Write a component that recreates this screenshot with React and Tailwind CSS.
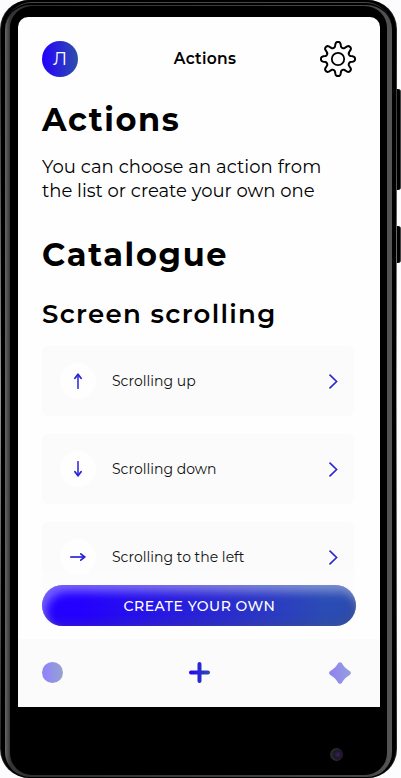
import React from "react";

const gearPath =
  Array.from({ length: 240 }, (_, i) => {
    const a = (i / 240) * Math.PI * 2;
    const r = 14.5 + (2.6 * Math.tanh(1.6 * Math.cos(8 * a) - 0.1)) / Math.tanh(1.6);
    return `${i ? "L" : "M"}${(18 + r * Math.cos(a)).toFixed(2)} ${(18 + r * Math.sin(a)).toFixed(2)}`;
  }).join("") + "Z";

function Gear() {
  return (
    <svg className="size-9" viewBox="0 0 36 36" fill="none" stroke="#000" strokeWidth="2" strokeLinejoin="round">
      <path d={gearPath} />
      <circle cx="18" cy="18" r="6.2" strokeWidth="1.8" />
    </svg>
  );
}

function Arrow({ turn }) {
  return (
    <svg className={`size-4 ${turn}`} viewBox="0 0 16 16" fill="none" stroke="#2b24d8" strokeWidth="1.8" strokeLinecap="round" strokeLinejoin="round">
      <path d="M8 15.2V1.4" strokeOpacity="0.85" />
      <path d="M4.9 5.2L8 1.4L11.1 5.2" />
    </svg>
  );
}

function Row({ label, turn }) {
  return (
    <li className="flex h-[70px] w-[312px] shrink-0 items-center rounded-[5px] bg-[#fbfbfb] pl-[18px] pr-4">
      <span className="flex size-9 items-center justify-center rounded-full bg-[#fefefe]">
        <Arrow turn={turn} />
      </span>
      <span className="ml-4 flex-1 whitespace-nowrap text-[14px] leading-5 text-[#111]">{label}</span>
      <svg className="h-4 w-[10px]" viewBox="0 0 10 16" fill="none" stroke="#2b24d8" strokeWidth="1.6">
        <path d="M1.5 1.7L8.6 8.5L1.5 15.3" />
      </svg>
    </li>
  );
}

export default function App() {
  return (
    <div className="relative h-[778px] w-[401px] overflow-hidden bg-[#fcfcff] font-['Montserrat','Inter',sans-serif] text-black">
      <div className="absolute left-[396px] top-[89px] h-[101px] w-[5px] rounded-r-[3px] border-r border-[#444] bg-black" />
      <div className="absolute left-[396px] top-[226px] h-[37px] w-[5px] rounded-r-[3px] border-r border-[#444] bg-black" />
      <div className="relative h-[778px] w-[397px] rounded-[29px] bg-gradient-to-b from-[#222] via-[#999] to-[#222] px-px">
        <div className="h-[778px] w-[395px] rounded-[29px] bg-black pl-[4px] pr-[4px] pt-[2px] pb-px">
          <div className="h-[775px] w-[387px] rounded-[27px] bg-[#484848] pt-px">
            <div className="h-[774px] rounded-[26px] bg-black pt-[2px]">
              <div className="h-[772px] rounded-[25px] bg-[linear-gradient(to_right,#666_0px,#353535_5px,#303030_30px,#484848_365px,#555_387px)] px-[5px] pb-[2px] pt-px">
                <div className="flex h-[769px] w-[377px] flex-col rounded-[22px] bg-black pl-2 pr-[7px] pt-[11px]">
                  <main className="relative flex h-[690px] w-[362px] flex-col overflow-hidden rounded-t-[10px] bg-[#fefefe]">
                    <header className="mt-6 grid h-9 grid-cols-[36px_1fr_36px] items-center px-6">
                      <span className="flex size-9 items-center justify-center rounded-full bg-[linear-gradient(to_right,#2400ff,#2d50a8)] text-[18px] leading-none text-white">Л</span>
                      <span className="ml-3 whitespace-nowrap text-center text-[15.5px] font-semibold leading-5 tracking-[0.3px]">Actions</span>
                      <Gear />
                    </header>
                    <section className="flex flex-col px-6">
                      <h1 className="mt-[23px] whitespace-nowrap text-[32px] font-bold leading-10 tracking-[1.6px]">Actions</h1>
                      <p className="mt-[15px] whitespace-nowrap text-[18px] leading-6">
                        <span className="block tracking-[0.07px]">You can choose an action from</span>
                        <span className="block">the list or create your own one</span>
                      </p>
                      <h2 className="mt-[32px] whitespace-nowrap text-[32px] font-bold leading-10 tracking-[1.68px]">Catalogue</h2>
                      <h3 className="mt-[23px] whitespace-nowrap text-[26px] font-semibold leading-8 tracking-[1.3px]">Screen scrolling</h3>
                      <ul className="mt-4 flex flex-col gap-[18px]">
                        <Row label="Scrolling up" turn="rotate-0" />
                        <Row label="Scrolling down" turn="rotate-180" />
                        <Row label="Scrolling to the left" turn="rotate-90" />
                      </ul>
                    </section>
                    <div className="absolute inset-x-0 bottom-0">
                      <div className="h-[68px] bg-[#fefefe]/60 px-6 pt-[14px]">
                        <button className="flex h-[41px] w-[314px] items-center justify-center rounded-full bg-[linear-gradient(to_right,#2400ff_12%,#2a28d2_55%,#2b4cb4_90%)] pl-px pt-px text-[14px] font-medium tracking-[0.5px] text-white shadow-[inset_4px_7px_10px_rgba(255,255,255,0.38),inset_-4px_-4px_10px_rgba(80,80,80,0.22)]">
                          CREATE YOUR OWN
                        </button>
                      </div>
                      <nav className="flex h-[68px] items-center justify-between bg-[#fbfbfb] pb-px pl-6 pr-[29px]">
                        <span className="size-[21px] rounded-full bg-[linear-gradient(to_right,#917fff,#94a4cf)]" />
                        <svg className="ml-[6px] size-[21px]" viewBox="0 0 21 21" fill="none" stroke="url(#plus)" strokeWidth="4" strokeLinecap="round">
                          <defs>
                            <linearGradient id="plus" gradientUnits="userSpaceOnUse" x1="0" y1="0" x2="21" y2="0">
                              <stop stopColor="#2400ff" />
                              <stop offset="1" stopColor="#2d50a8" />
                            </linearGradient>
                          </defs>
                          <path d="M10.5 2V19M2 10.5H19" />
                        </svg>
                        <svg className="size-[22px]" viewBox="0 0 22 22">
                          <defs>
                            <linearGradient id="star">
                              <stop stopColor="#9080f4" />
                              <stop offset="1" stopColor="#94a0dc" />
                            </linearGradient>
                          </defs>
                          <path fill="url(#star)" d="M9.3 1Q11 -.7 12.7 1C14.8 4.6 17.4 7.2 21 9.3Q22.8 11 21 12.7C17.4 14.8 14.8 17.4 12.7 21Q11 22.7 9.3 21C7.2 17.4 4.6 14.8 1 12.7Q-.8 11 1 9.3C4.6 7.2 7.2 4.6 9.3 1Z" />
                        </svg>
                      </nav>
                    </div>
                  </main>
                  <div className="mr-[37px] mt-[41px] size-[13px] self-end rounded-full bg-[radial-gradient(circle_at_60%_50%,#3b2065_0px,#1c1525_4px,#29292b_6px)]" />
                </div>
              </div>
            </div>
          </div>
        </div>
      </div>
    </div>
  );
}
